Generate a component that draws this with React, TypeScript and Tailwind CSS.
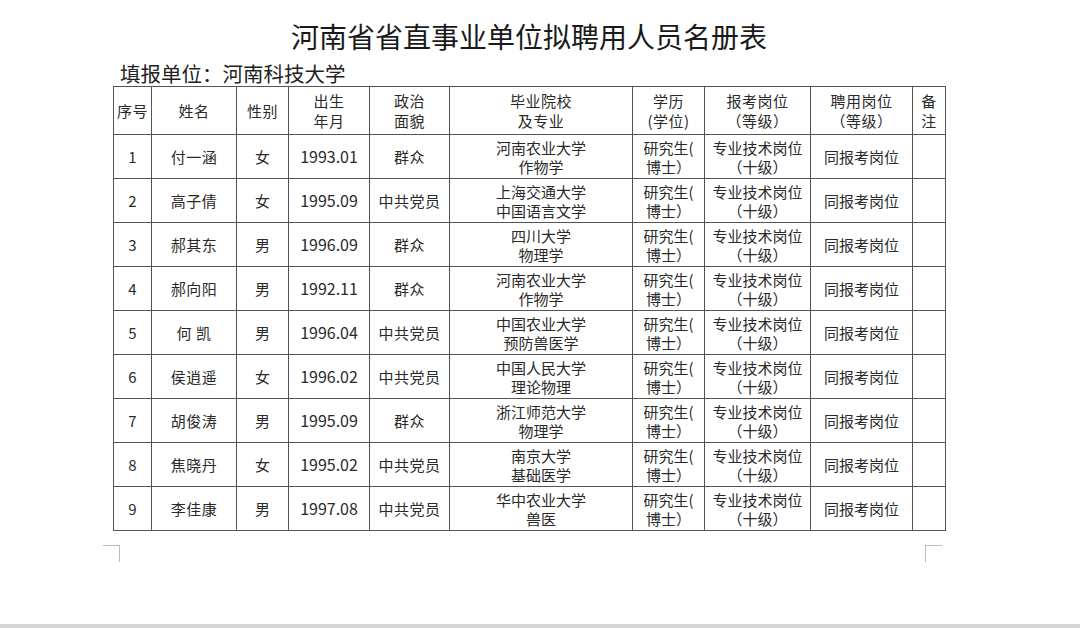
const rows = [
  ['1', '付一涵', '女', '1993.01', '群众', '河南农业大学', '作物学'],
  ['2', '高子倩', '女', '1995.09', '中共党员', '上海交通大学', '中国语言文学'],
  ['3', '郝其东', '男', '1996.09', '群众', '四川大学', '物理学'],
  ['4', '郝向阳', '男', '1992.11', '群众', '河南农业大学', '作物学'],
  ['5', '何 凯', '男', '1996.04', '中共党员', '中国农业大学', '预防兽医学'],
  ['6', '侯逍遥', '女', '1996.02', '中共党员', '中国人民大学', '理论物理'],
  ['7', '胡俊涛', '男', '1995.09', '群众', '浙江师范大学', '物理学'],
  ['8', '焦晓丹', '女', '1995.02', '中共党员', '南京大学', '基础医学'],
  ['9', '李佳康', '男', '1997.08', '中共党员', '华中农业大学', '兽医'],
];

const cell = 'border border-[#555] p-0 text-center align-middle';
const head = `${cell} font-normal leading-[20px] tracking-[0.5px]`;

export default function App() {
  return (
    <div
      className="h-[628px] w-[1080px] bg-white flex flex-col text-[#222]"
      style={{ fontFamily: '"Noto Sans CJK SC", "Noto Sans", sans-serif' }}
    >
      <div className="flex-1 pl-[113px]">
        <div className="w-[832px]">
          {/* Title */}
          <h1 className="pt-[19px] h-[55px] text-center text-[28px] leading-[34px] text-[#1a1a1a]">
            河南省省直事业单位拟聘用人员名册表
          </h1>
          <div className="pl-[7px] h-[31px] text-[20.5px] leading-[24px] pt-[6px]">
            填报单位：河南科技大学
          </div>

          {/* Roster table */}
          <table className="border-collapse table-fixed w-[832px] text-[15px] leading-[19px] text-[#2a2a2a]">
            <colgroup>
              <col className="w-[38px]" />
              <col className="w-[85px]" />
              <col className="w-[52px]" />
              <col className="w-[81px]" />
              <col className="w-[80px]" />
              <col className="w-[183px]" />
              <col className="w-[72px]" />
              <col className="w-[106px]" />
              <col className="w-[102px]" />
              <col className="w-[33px]" />
            </colgroup>
            <thead>
              <tr className="h-[48px]">
                <th className={head}>序号</th>
                <th className={head}>姓名</th>
                <th className={head}>性别</th>
                <th className={`${head} border-l-[#222]`}>
                  出生<br />年月
                </th>
                <th className={head}>
                  政治<br />面貌
                </th>
                <th className={head}>
                  毕业院校<br />及专业
                </th>
                <th className={head}>
                  学历<br />(学位)
                </th>
                <th className={head}>
                  报考岗位<br />（等级）
                </th>
                <th className={head}>
                  聘用岗位<br />（等级）
                </th>
                <th className={`${head} border-l-[#222]`}>
                  备<br />注
                </th>
              </tr>
            </thead>
            <tbody>
              {rows.map((r) => (
                <tr key={r[0]} className="h-[44px]">
                  <td className={cell}>{r[0]}</td>
                  <td className={`${cell} tracking-[0.5px]`}>{r[1]}</td>
                  <td className={cell}>{r[2]}</td>
                  <td className={`${cell} text-[16px] border-l-[#222]`}>{r[3]}</td>
                  <td className={`${cell} tracking-[0.5px]`}>{r[4]}</td>
                  <td className={cell}>
                    {r[5]}
                    <br />
                    {r[6]}
                  </td>
                  <td className={cell}>
                    研究生(
                    <br />
                    博士）
                  </td>
                  <td className={cell}>
                    专业技术岗位
                    <br />
                    （十级）
                  </td>
                  <td className={cell}>同报考岗位</td>
                  <td className={`${cell} border-l-[#222]`}></td>
                </tr>
              ))}
            </tbody>
          </table>
        </div>

        {/* Page margin corner marks */}
        <div className="mt-[14px] -ml-[10px] w-[839px] flex justify-between">
          <div className="w-[17px] h-[17px] border-t border-r border-[#bbb]" />
          <div className="w-[17px] h-[17px] border-t border-l border-[#bbb]" />
        </div>
      </div>
      <div className="h-[4px] bg-[#d6d6d6]" />
    </div>
  );
}
